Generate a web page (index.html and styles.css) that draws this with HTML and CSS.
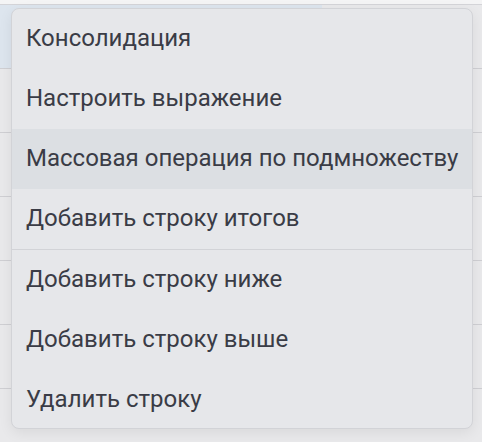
FILE: index.html
```html
<!DOCTYPE html>
<html lang="ru">
<head>
<meta charset="utf-8">
<link rel="stylesheet" href="styles.css">
</head>
<body>
<div class="table">
  <div class="head"></div>
  <div class="row selected"><div class="cell-sel"></div></div>
  <div class="row"></div>
  <div class="row"></div>
  <div class="row"></div>
  <div class="row"></div>
  <div class="row"></div>
  <div class="row"></div>
</div>
<div class="menu">
  <div class="item">Консолидация</div>
  <div class="item">Настроить выражение</div>
  <div class="item active">Массовая операция по подмножеству</div>
  <div class="item">Добавить строку итогов</div>
  <div class="sep"></div>
  <div class="item">Добавить строку ниже</div>
  <div class="item">Добавить строку выше</div>
  <div class="item">Удалить строку</div>
</div>
</body>
</html>
```
FILE: styles.css
```css
html, body {
  margin: 0;
  padding: 0;
}
body {
  width: 482px;
  height: 442px;
  overflow: hidden;
  background: #efeff1;
  position: relative;
  font-family: Roboto, "Noto Sans", sans-serif;
}
.table {
  display: flex;
  flex-direction: column;
}
.head {
  height: 4px;
  background: #f4f4f5;
  border-bottom: 1px solid #d4d4d8;
}
.row {
  height: 63px;
  border-bottom: 1px solid #cfcfd3;
  background: #e9e9eb;
  display: flex;
}
.cell-sel {
  width: 322px;
  background: #dde5ee;
}
.menu {
  position: absolute;
  left: 11px;
  top: 8px;
  width: 460px;
  height: 419px;
  background: #e6e7ea;
  border: 1px solid #d2d3d7;
  border-radius: 8px;
  box-shadow: 0 4px 14px rgba(0, 0, 0, 0.07);
  display: flex;
  flex-direction: column;
  overflow: hidden;
}
.item {
  height: 60px;
  box-sizing: border-box;
  flex: none;
  display: flex;
  align-items: center;
  padding-left: 14px;
  padding-bottom: 2px;
  font-size: 24px;
  color: #3a3c46;
  white-space: nowrap;
}
.item.active {
  background: #dcdfe3;
}
.sep {
  height: 1px;
  flex: none;
  background: #d2d3d7;
}
```
